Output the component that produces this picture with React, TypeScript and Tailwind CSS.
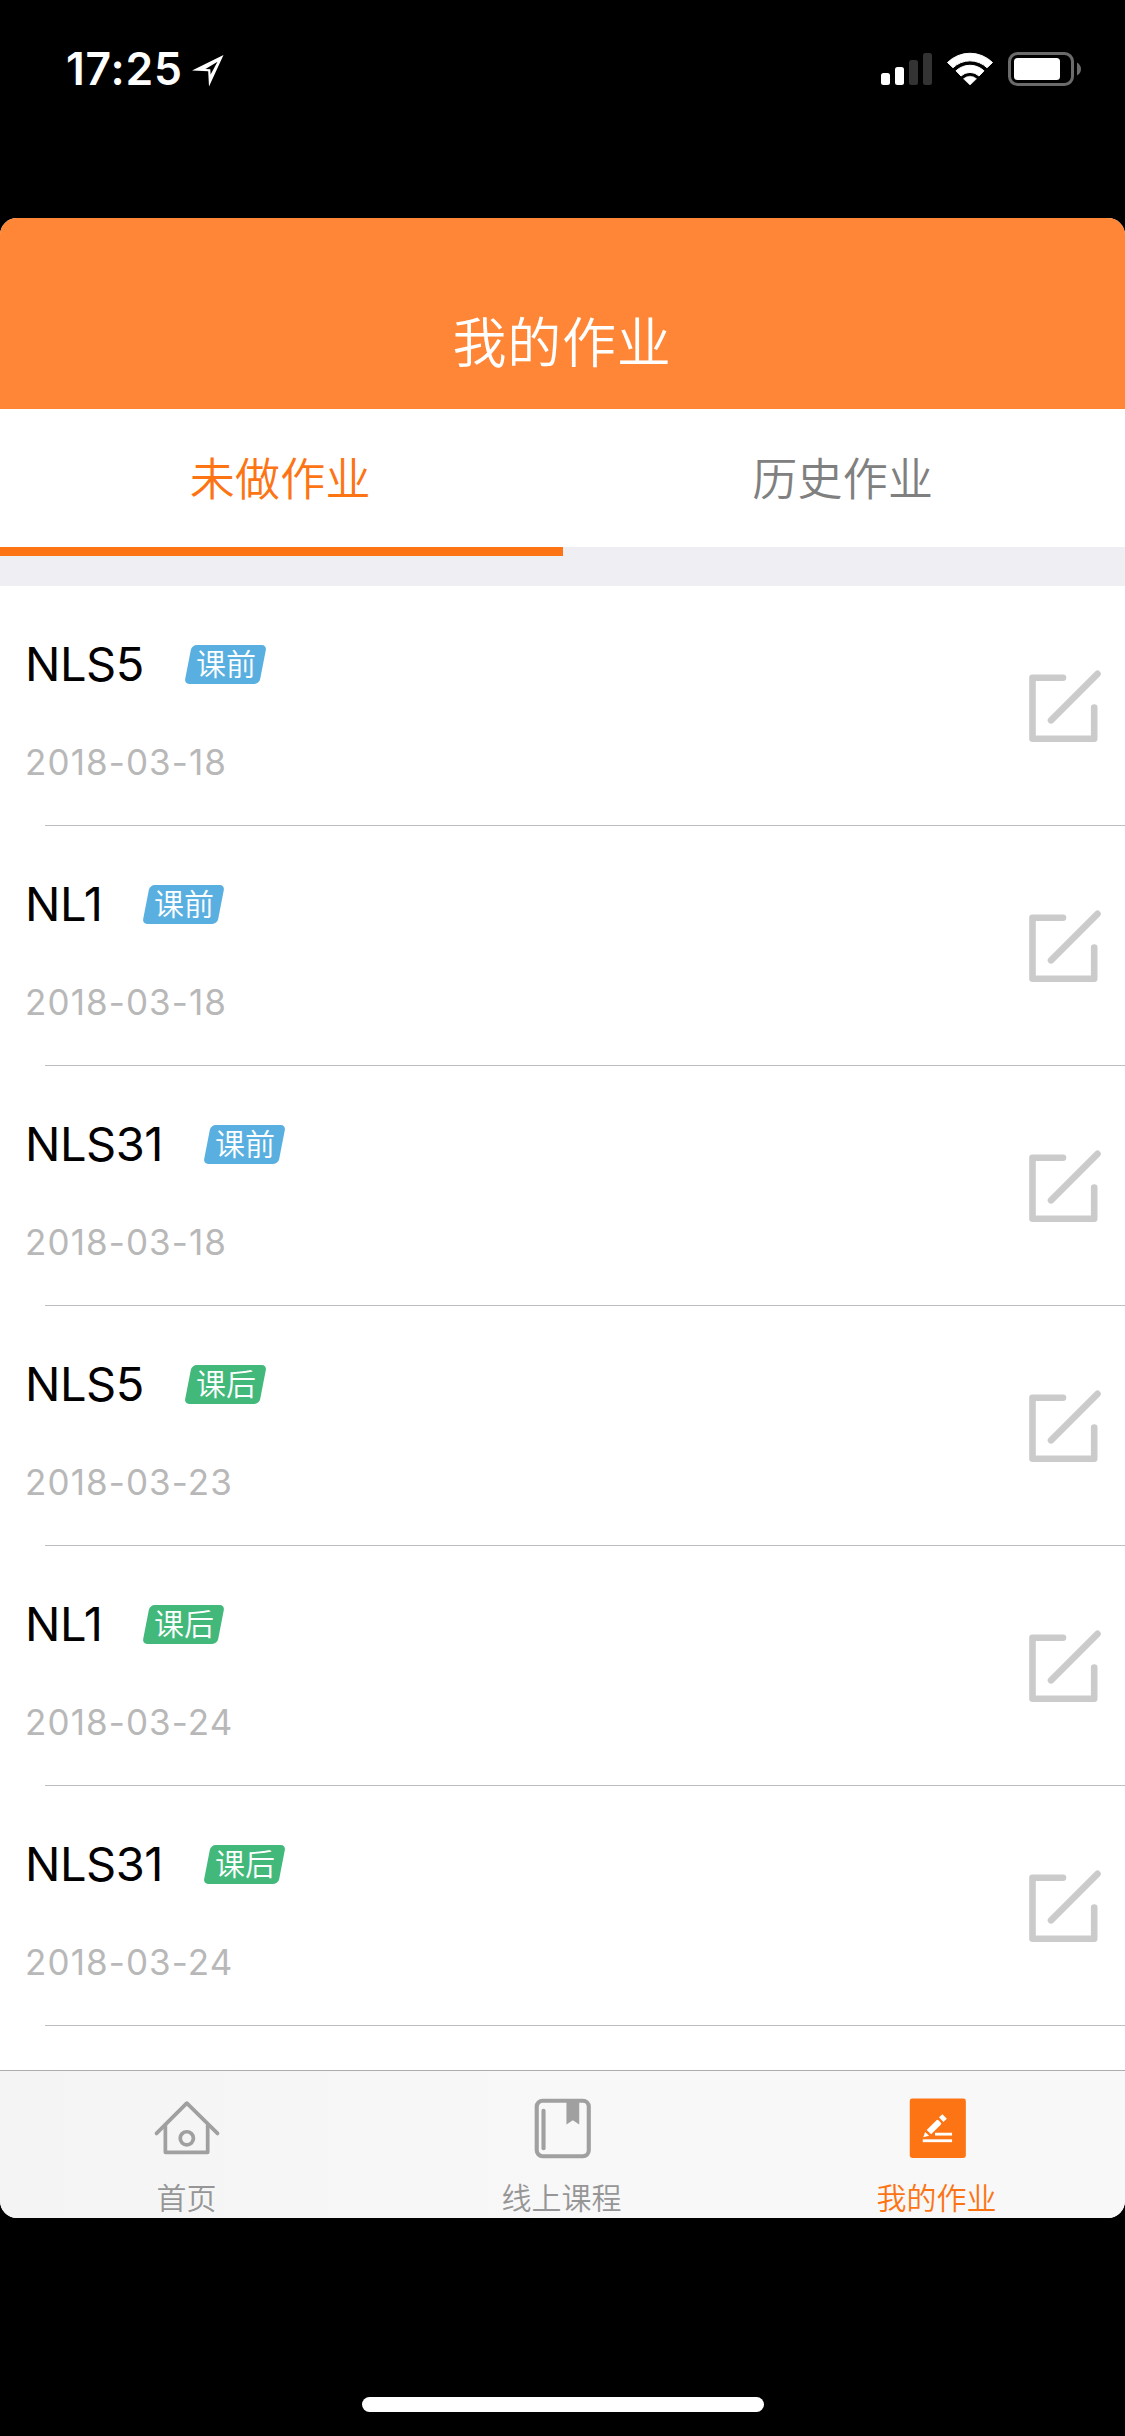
import { useState } from 'react';

type Homework = {
  id: number;
  name: string;
  kind: 'before' | 'after';
  date: string;
};

const HOMEWORKS: Homework[] = [
  { id: 1, name: 'NLS5', kind: 'before', date: '2018-03-18' },
  { id: 2, name: 'NL1', kind: 'before', date: '2018-03-18' },
  { id: 3, name: 'NLS31', kind: 'before', date: '2018-03-18' },
  { id: 4, name: 'NLS5', kind: 'after', date: '2018-03-23' },
  { id: 5, name: 'NL1', kind: 'after', date: '2018-03-24' },
  { id: 6, name: 'NLS31', kind: 'after', date: '2018-03-24' },
];

function StatusBar() {
  return (
    <div className="flex h-[218px] items-start justify-between pl-[66px] pr-[44px] pt-[48px] text-white">
      <div className="flex h-[42px] items-center">
        <span className="text-[44.5px] font-semibold leading-[42px] tracking-[0.8px]">17:25</span>
        <svg className="ml-[8px] mt-[4px]" width="34" height="34" viewBox="0 0 34 34">
          <path fillRule="evenodd" fill="white" d="M1 16.5 L32.5 1 L18 32.5 L17.2 17.3 Z M14.5 15 L19.3 15.2 L19.6 20.5 L26.5 7.8 Z" />
        </svg>
      </div>
      <svg className="mt-[4px]" width="200" height="34" viewBox="0 0 200 34">
        <rect x="0" y="21" width="9" height="12" rx="2.5" fill="white" />
        <rect x="14" y="15" width="9" height="18" rx="2.5" fill="white" />
        <rect x="28" y="8" width="9" height="25" rx="2.5" fill="#333" />
        <rect x="42" y="1" width="9" height="32" rx="2.5" fill="#333" />
        <path d="M66.5 10.5 A32 32 0 0 1 111.5 10.5 L106 15.7 A24.5 24.5 0 0 0 72 15.7 Z" fill="white" stroke="white" strokeWidth="1" strokeLinejoin="round" />
        <path d="M75 18.8 A20.5 20.5 0 0 1 103 18.8 L98 24 A13 13 0 0 0 80 24 Z" fill="white" stroke="white" strokeWidth="1" strokeLinejoin="round" />
        <path d="M82.5 26.8 A9.5 9.5 0 0 1 95.5 26.8 L89 33 Z" fill="white" stroke="white" strokeWidth="0.6" strokeLinejoin="round" />
        <rect x="128.5" y="1.5" width="63" height="31" rx="8" fill="none" stroke="#6b6b6b" strokeWidth="3" />
        <rect x="133" y="6" width="46" height="22" rx="3.5" fill="white" />
        <path d="M196 10.5 Q200 13 200 17 Q200 21 196 23.5 Z" fill="#6b6b6b" />
      </svg>
    </div>
  );
}

function EditIcon() {
  return (
    <svg width="76" height="76" viewBox="0 0 76 76" fill="none" stroke="#cbcbcb" strokeWidth="6.6" strokeLinecap="round" strokeLinejoin="round">
      <path d="M36 9.8 H5.5 V70.8 H67.2 V39.5" />
      <path d="M24 52.3 L70.5 5.8" />
    </svg>
  );
}

function Badge({ kind }: { kind: Homework['kind'] }) {
  return (
    <div className={`flex h-[39px] w-[75px] -skew-x-[11deg] items-center justify-center rounded-[5px] ${kind === 'before' ? 'bg-[#59b0e0]' : 'bg-[#42b97b]'}`}>
      <span className="skew-x-[11deg] text-[30px] font-[350] leading-[39px] text-white">
        {kind === 'before' ? '课前' : '课后'}
      </span>
    </div>
  );
}

function HomeIcon() {
  return (
    <svg width="70" height="62" viewBox="0 0 70 62" fill="none" stroke="#a0a0a0" strokeWidth="3.8" strokeLinecap="round" strokeLinejoin="round">
      <path d="M3 36 L33.8 5.2 L65 36" />
      <path d="M12 28 V55.2 H55 V28" />
      <circle cx="33.8" cy="41" r="6.7" />
    </svg>
  );
}

function BookIcon() {
  return (
    <svg width="58" height="62" viewBox="0 0 58 62" fill="none">
      <rect x="2.3" y="2.8" width="52.9" height="56.4" rx="6" stroke="#a0a0a0" strokeWidth="4.2" />
      <path d="M9.2 13 V51" stroke="#a0a0a0" strokeWidth="4.2" strokeLinecap="round" />
      <path d="M32.5 3 H45.5 V27 L39 22.5 L32.5 27 Z" fill="#a0a0a0" />
    </svg>
  );
}

function HomeworkIcon() {
  return (
    <svg width="58" height="62" viewBox="0 0 58 62">
      <rect x="0.3" y="0.5" width="57" height="60.5" rx="2.5" fill="#fc7414" />
      <g fill="white">
        <path d="M17.5 32.5 L27.5 22.5 Q28.5 21.8 29.5 22.5 L32 25.2 Q32.8 26 32 27 L22 36.8 Z" />
        <path d="M30 19.5 L33.5 16.5 L38 21 L34.5 24.5 Z" />
        <path d="M16 34.5 L20 38.3 L14 39.8 Z" />
        <rect x="26" y="35.3" width="17.3" height="2.9" />
        <rect x="13.5" y="42" width="29.8" height="2.9" />
      </g>
    </svg>
  );
}

const NAV_ITEMS = [
  { key: 'home', label: '首页', icon: <HomeIcon /> },
  { key: 'course', label: '线上课程', icon: <BookIcon /> },
  { key: 'homework', label: '我的作业', icon: <HomeworkIcon /> },
];

export default function App() {
  const [tab, setTab] = useState('todo');
  const [nav, setNav] = useState('homework');

  return (
    <div className="flex h-[2436px] w-[1125px] flex-col overflow-hidden bg-black font-[Inter,'Noto_Sans_CJK_SC',sans-serif]">
      <StatusBar />

      <div className="flex h-[2000px] flex-col overflow-hidden rounded-[17px] bg-white">
        <header className="flex h-[191px] shrink-0 items-end justify-center bg-[#ff8636] pb-[33px]">
          <h1 className="pr-px text-[54px] font-[350] leading-[64px] tracking-[0.7px] text-white">我的作业</h1>
        </header>

        <div className="flex h-[177px] shrink-0 bg-[#eeeef3]">
          <button
            onClick={() => setTab('todo')}
            className={`flex h-[147px] flex-1 flex-col bg-white text-[45px] font-[350] tracking-[0.3px] ${tab === 'todo' ? 'text-[#fc7414]' : 'text-[#808080]'}`}
          >
            <span className="flex h-[138px] w-full shrink-0 items-center justify-center pr-[2px] pt-[3px]">未做作业</span>
            {tab === 'todo' && <span className="h-[9px] w-full bg-[#fc7414]" />}
          </button>
          <button
            onClick={() => setTab('history')}
            className={`flex h-[138px] flex-1 flex-col bg-white text-[45px] font-[350] tracking-[0.3px] ${tab === 'history' ? 'text-[#fc7414]' : 'text-[#808080]'}`}
          >
            <span className="flex h-[138px] w-full shrink-0 items-center justify-center pr-[2px] pt-[3px]">历史作业</span>
            {tab === 'history' && <span className="h-[9px] w-full shrink-0 bg-[#fc7414]" />}
          </button>
        </div>

        <main className="flex-1 overflow-hidden">
          {HOMEWORKS.map((item) => (
            <div key={item.id} className="flex h-[240px] flex-col">
              <div className="flex h-[239px] items-start justify-between pl-[25px] pr-[22px]">
                <div className="pt-[53px]">
                  <div className="flex h-[50px] items-center">
                    <span className="text-[47px] leading-[50px] tracking-[-0.5px] text-black">{item.name}</span>
                    <div className="ml-[44px]">
                      <Badge kind={item.kind} />
                    </div>
                  </div>
                  <p className="mt-[52px] text-[35px] leading-[42px] tracking-[1.1px] text-[#b8b8b8]">{item.date}</p>
                </div>
                <div className="pt-[82px]">
                  <EditIcon />
                </div>
              </div>
              <div className="ml-[45px] h-px bg-[#bdbdc1]" />
            </div>
          ))}
        </main>

        <nav className="flex h-[148px] shrink-0 border-t border-[#adadad] bg-linear-to-r from-[#f4f4f4] via-[#f8f8f9] to-[#f8f8f8]">
          {NAV_ITEMS.map((item) => (
            <button
              key={item.key}
              onClick={() => setNav(item.key)}
              className={`flex flex-1 flex-col items-center pt-[27px] ${nav === item.key ? 'text-[#fc7414]' : 'text-[#969696]'}`}
            >
              {item.icon}
              <span className="mt-[19px] pr-[2px] text-[30px] font-[350] leading-[40px]">{item.label}</span>
            </button>
          ))}
        </nav>
      </div>

      <div className="flex flex-1 items-end justify-center pb-[24px]">
        <div className="h-[15px] w-[402px] rounded-full bg-white" />
      </div>
    </div>
  );
}
